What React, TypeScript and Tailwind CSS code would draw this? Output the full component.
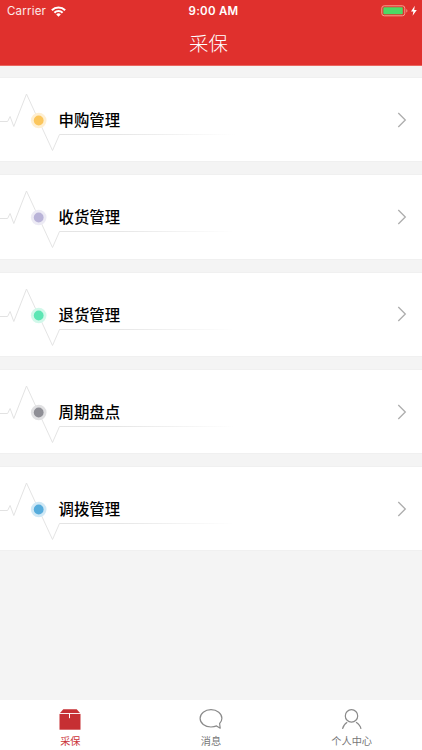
import React from 'react';

interface MenuItem {
  id: string;
  label: string;
  color: string;
}

const MENU_ITEMS: MenuItem[] = [
  { id: 'purchase', label: '申购管理', color: '#fbc65c' },
  { id: 'receive', label: '收货管理', color: '#b9b3d8' },
  { id: 'return', label: '退货管理', color: '#5ce6b4' },
  { id: 'inventory', label: '周期盘点', color: '#8f8f96' },
  { id: 'transfer', label: '调拨管理', color: '#56acdc' },
];

const StatusBar: React.FC = () => (
  <div className="grid h-[22px] grid-cols-3 items-center font-['Inter','Liberation_Sans',sans-serif] text-[11.5px] leading-none">
    <div className="flex items-center gap-[5px] pl-[7px] pt-px">
      <span className="tracking-[0.2px] text-white/90">Carrier</span>
      <svg width="15" height="11" viewBox="0 0 15 11" fill="none" stroke="currentColor" strokeWidth="2.1">
        <path d="M.9 4.200a9.300 9.300 0 0 1 13.200 0" />
        <path d="M3.400 6.700a5.800 5.800 0 0 1 8.200 0" />
        <path d="M7.500 10.700 5.200 8.400a3.250 3.250 0 0 1 4.600 0z" fill="currentColor" stroke="none" />
      </svg>
    </div>
    <span className="pl-[5px] pt-px text-center font-semibold tracking-[0.25px]">9:00 AM</span>
    <div className="flex items-center justify-end pr-[4px]">
      <svg width="37" height="12" viewBox="0 0 37 12">
        <rect x=".8" y=".8" width="23" height="10" rx="2.4" fill="none" stroke="#f5a08e" />
        <rect x="2.3" y="2.3" width="19.5" height="7" rx=".8" fill="#4cd964" />
        <path d="M25.400 4v3.600c1.300-.5 1.300-3.100 0-3.600z" fill="#f5a08e" />
        <path d="M33.800.8 30 6.400h2.400l-.8 4.400 4.200-5.900h-2.600z" fill="#fff" />
      </svg>
    </div>
  </div>
);

const PulseLine: React.FC<{ id: string; color: string }> = ({ id, color }) => (
  <svg className="pointer-events-none absolute left-0 top-0" width="240" height="83" viewBox="0 0 240 83" fill="none">
    <defs>
      <linearGradient id={`fade-${id}`} gradientUnits="userSpaceOnUse" x1="0" y1="0" x2="235" y2="0">
        <stop offset="0" stopColor="#e2e2e2" />
        <stop offset=".5" stopColor="#e6e6e6" />
        <stop offset="1" stopColor="#fff" />
      </linearGradient>
    </defs>
    <path
      d="M0 43.500h7.600l2.500-5L13.800 48.500 26.500 16l26 56.500 7-16H235"
      stroke={`url(#fade-${id})`}
    />
    <circle cx="38.7" cy="42.5" r="7.8" fill="#fff" />
    <circle cx="38.7" cy="42.5" r="7.8" fill={color} fillOpacity=".28" />
    <circle cx="38.7" cy="42.5" r="4.9" fill={color} />
  </svg>
);

const MenuRow: React.FC<{ item: MenuItem }> = ({ item }) => (
  <button className="relative flex h-[83.3px] w-full shrink-0 items-center justify-between bg-white pl-[58.5px] pr-[15px] text-left outline outline-[#f0f0f0]">
    <PulseLine id={item.id} color={item.color} />
    <span className="relative text-[15.4px] font-medium leading-none text-black">{item.label}</span>
    <svg width="10" height="16" viewBox="0 0 10 16" fill="none" stroke="#adadad" strokeWidth="1.3">
      <path d="m1.300 1 7 7-7 7" />
    </svg>
  </button>
);

const BoxIcon: React.FC = () => (
  <svg width="22" height="22" viewBox="0 0 22 22">
    <path d="M4.300.3h13.400L21 4.100H1z" fill="#c62f33" />
    <path d="M.5 4.900h21v15.800h-21z" fill="#c62f33" />
    <path d="M10.500 4.500v4.700" stroke="#fff" strokeWidth="1" />
  </svg>
);

const ChatIcon: React.FC = () => (
  <svg width="24" height="22" viewBox="0 0 24 22" fill="none" stroke="#8a8a8a" strokeWidth="1.2" strokeLinejoin="round">
    <path d="M20.600 14.500c1.500-1.500 2.300-3.200 2.300-5.200C22.900 4.400 18.100.7 12 .7S1.100 4.400 1.100 9.300s4.800 8.700 10.900 8.700c2.200 0 4.100-.4 5.600-1.100l3.600 2.300z" />
  </svg>
);

const UserIcon: React.FC = () => (
  <svg width="22" height="22" viewBox="0 0 22 22" fill="none" stroke="#8a8a8a" strokeWidth="1.2">
    <circle cx="10.5" cy="6.9" r="6.2" />
    <path d="M1.500 19.800c.7-3 2.300-5.200 4.700-6.600M20 19.800c-.7-3-2.600-5.200-5-6.600" />
  </svg>
);

const TABS = [
  { label: '采保', icon: <BoxIcon />, active: true },
  { label: '消息', icon: <ChatIcon />, active: false },
  { label: '个人中心', icon: <UserIcon />, active: false },
];

const App: React.FC = () => {
  return (
    <div className="flex h-[750px] w-[422px] flex-col overflow-hidden bg-[#f4f4f4] font-['Noto_Sans_CJK_SC',sans-serif]">
      <header className="h-[66px] shrink-0 border-b border-[#e9665f] bg-[#e0302d] text-white">
        <StatusBar />
        <h1 className="pr-[5px] pt-[11px] text-center text-[19.4px] font-light leading-[19px]">采保</h1>
      </header>

      <main className="flex flex-1 flex-col gap-[14px] pt-[12px]">
        {MENU_ITEMS.map((item) => (
          <MenuRow key={item.id} item={item} />
        ))}
      </main>

      <nav className="grid h-[50px] shrink-0 grid-cols-3 bg-white">
        {TABS.map((tab) => (
          <button
            key={tab.label}
            className={`flex flex-col items-center gap-[5px] pt-[9px] text-[10.2px] leading-none ${
              tab.active ? 'text-[#cb3337]' : 'text-[#777]'
            }`}
          >
            {tab.icon}
            <span>{tab.label}</span>
          </button>
        ))}
      </nav>
    </div>
  );
};

export default App;
